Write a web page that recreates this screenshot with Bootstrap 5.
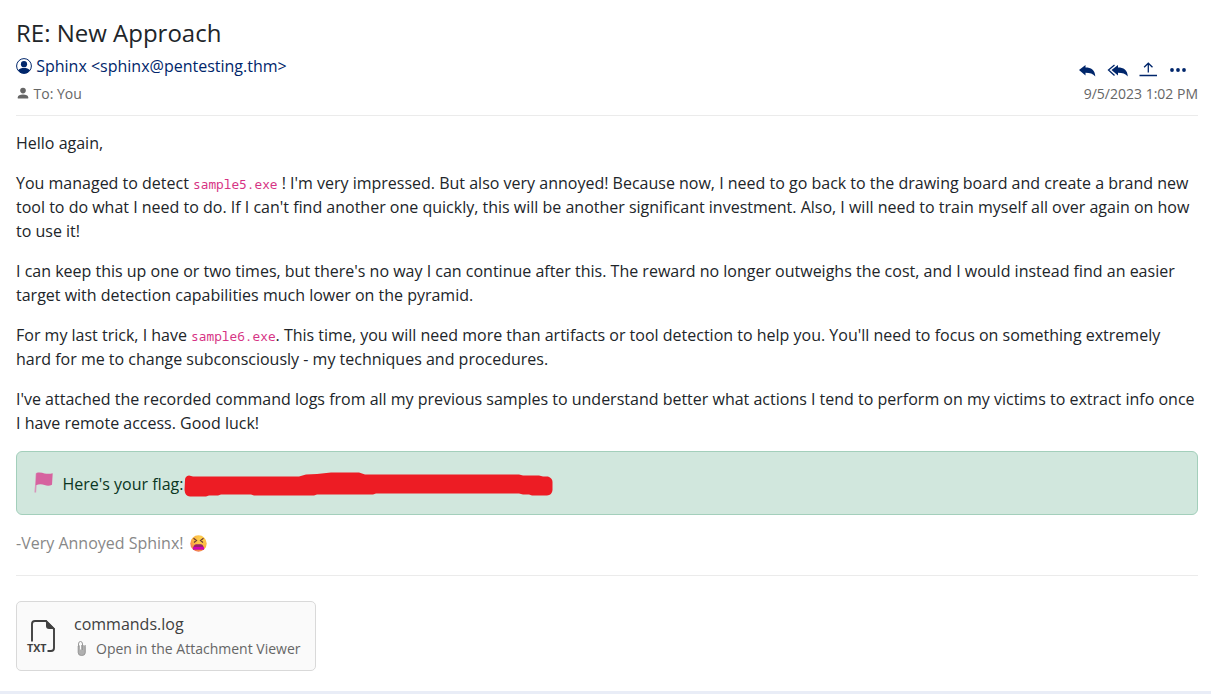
<!DOCTYPE html>
<html lang="en">
<head>
<meta charset="utf-8">
<title>RE: New Approach</title>
<meta name="viewport" content="width=device-width, initial-scale=1">
<link rel="stylesheet" href="https://cdn.jsdelivr.net/npm/bootstrap@5.3.0/dist/css/bootstrap.min.css">
<style>
html{overflow:hidden}
body{font-family:"Open Sans","Noto Sans",sans-serif;font-size:16px;line-height:24px;color:#212529;height:694px;overflow:hidden}
.mail-page{height:691px;padding:16px 13px 0 16px}
.mail-foot{height:3px;background:#e9edf7}
.subject{font-size:24px;line-height:34px;font-weight:400;margin:0}
.navy{color:#00266b}
.sender{height:24px;margin-top:4px;gap:4.2px}
.meta{color:#666;font-size:14px;line-height:20px}
.to-line{margin-top:6px;gap:4.5px}
.mail-head{height:100px;border-bottom:1px solid #ebebeb}
.head-side{padding-bottom:11px}
.mail-actions{margin-bottom:4px;height:20px}
.mail-text{padding-top:15px}
.mail-text p{margin-bottom:16px}
code{font-family:"Noto Sans Mono","DejaVu Sans Mono",monospace;font-size:12.8px;line-height:1;color:#d63384}
.flag-box{background:#d1e7dd;border-color:#a3cfbb;color:#0a3622;height:64px;padding:2px 16px 0 17px;margin:0 0 16px}
.flag-label{margin-left:7.5px;margin-right:1px}
.file-card{width:300px;height:70px;background:#fafafa;border:1px solid #d9d9d9;border-radius:5px;margin-top:25px;padding-left:9px;color:#404040}
.file-copy{margin-left:18px;padding-bottom:2px}
.file-copy .meta{margin-top:3px;padding-left:2px;gap:9px}
.sign{color:#888;gap:6px;padding-bottom:20px;border-bottom:1px solid #ebebeb}
svg{display:block;flex:none}
</style>
<script src="https://cdn.jsdelivr.net/npm/bootstrap@5.3.0/dist/js/bootstrap.bundle.min.js"></script>
</head>
<body class="bg-white">
<main class="mail-page">
  <header class="mail-head d-flex justify-content-between">
    <div>
      <h1 class="subject">RE: New Approach</h1>
      <div class="sender navy d-flex align-items-center">
        <svg width="16" height="16" viewBox="0 0 16 16"><circle cx="8" cy="8" r="7.4" fill="#fff" stroke="#00266b"/><circle cx="8" cy="6.2" r="3.1" fill="#00266b"/><path d="M2 12.6C3.4 10.6 5.5 10 8 10s4.600.6 6 2.600A7.500 7.500 0 0 1 8 15.500 7.500 7.500 0 0 1 2 12.600Z" fill="#00266b"/></svg>
        <span>Sphinx &lt;sphinx@pentesting.thm&gt;</span>
      </div>
      <div class="meta to-line d-flex align-items-center">
        <svg width="13" height="14" viewBox="0 0 13 14"><circle cx="7" cy="3.600" r="2.800" fill="#666"/><path d="M1.800 11.500V10.200C1.800 8.200 4 7.400 7 7.400s5.200.8 5.200 2.800V11.500Z" fill="#666"/></svg>
        <span>To: You</span>
      </div>
    </div>
    <div class="head-side d-flex flex-column align-items-end justify-content-end">
      <div class="mail-actions d-flex align-items-center me-2">
        <svg width="112" height="20" viewBox="1078 60 112 20">
          <g fill="#00266b"><path d="M1079 70 1085.500 65V67.600C1091 67.600 1095 70 1095.300 76.500 1093 73.700 1090 72.800 1085.500 72.800V75.500Z"/>
          <path d="M1111.500 70 1118 65V67.600C1123.500 67.600 1127.500 70 1127.800 76.500 1125.500 73.700 1122.500 72.800 1118 72.800V75.500Z"/>
          <circle cx="1172" cy="70" r="1.900"/><circle cx="1178" cy="70" r="1.900"/><circle cx="1184" cy="70" r="1.900"/></g>
          <g fill="none" stroke="#00266b" stroke-width="1.300"><path d="M1114.500 65 1108.500 70 1114.500 75.500M1148.300 72.500V63.500M1144.100 67.300 1148.300 63.200 1152.500 67.300M1139.500 75.500H1157"/></g>
        </svg>
      </div>
      <div class="meta">9/5/2023 1:02 PM</div>
    </div>
  </header>
  <article class="mail-text">
    <p>Hello again,</p>
    <p>You managed to detect <code>sample5.exe</code> ! I'm very impressed. But also very annoyed! Because now, I need to go back to the drawing board and create a brand new tool to do what I need to do. If I can't find another one quickly, this will be another significant investment. Also, I will need to train myself all over again on how to use it!</p>
    <p>I can keep this up one or two times, but there's no way I can continue after this. The reward no longer outweighs the cost, and I would instead find an easier target with detection capabilities much lower on the pyramid.</p>
    <p>For my last trick, I have <code>sample6.exe</code>. This time, you will need more than artifacts or tool detection to help you. You'll need to focus on something extremely hard for me to change subconsciously - my techniques and procedures.</p>
    <p>I've attached the recorded command logs from all my previous samples to understand better what actions I tend to perform on my victims to extract info once I have remote access. Good luck!</p>
    <div class="alert flag-box d-flex align-items-center" role="alert">
      <svg width="21" height="24" viewBox="0 0 21 24"><path d="M2.500 1.500 1.300 20.500" stroke="#d796bb" stroke-width="1.600" fill="none"/><path d="M2.300 1C5.500.2 8 .7 10.500 1.400S16 2 18.700 1.200L18 12.700C15.500 14 13 13.800 10.500 13S5 12 1.800 13.300Z" fill="#d6639f"/></svg>
      <span class="flag-label">Here's your flag:</span>
      <svg width="370" height="26" viewBox="185 471 370 26"><path d="M186 480Q186 476 190 475.500L194 476.500H300L307 474.500 318 474 332 472.500H360L366 474.500H520L524 475.500H540L544 476.500H549Q553.500 478 553.500 482V490Q553 495.300 548 495.500H533L530 494.500H524L520 493.500H377L374 494.500H318L315 495.500H255L252 494.500H222L219 495.500H210L207 496.500H191Q186 496 185.500 490Z" fill="#ed1c24"/></svg>
    </div>
    <div class="sign d-flex align-items-center">
      <span>-Very Annoyed Sphinx!</span>
      <svg width="17" height="17" viewBox="0 0 17 17"><defs><radialGradient id="face" cx=".65" cy=".25" r=".85"><stop stop-color="#ffd550"/><stop offset=".6" stop-color="#fbb341"/><stop offset="1" stop-color="#ef655d"/></radialGradient></defs><circle cx="8.500" cy="8.500" r="8.200" fill="url(#face)"/><path d="M3.500 3.200 6.500 5.500 4 7.500M13.500 3.200 10.500 5.500 13 7.500" fill="none" stroke="#6b3b35" stroke-width="1.200"/><path d="M3 14.500C3 12 4.200 9.200 6 9.200H11C12.800 9.200 14 12 14 14.500Z" fill="#97226b"/><path d="M3.200 12H13.800L14 14.500H3Z" fill="#d500b5"/></svg>
    </div>
  </article>
  <section class="file-card d-flex align-items-center">
    <svg width="30" height="36" viewBox="26 618 30 36"><path d="M32 641.500V624Q32 621 35 621H46L54 629V648Q54 651 51 651H47.500" fill="none" stroke="#404040" stroke-width="1.900"/><path d="M46 620 55 629H49Q46 629 46 626Z" fill="#404040"/><text x="27" y="652" font-family="Open Sans" font-size="11" font-weight="700" textLength="19.500" lengthAdjust="spacingAndGlyphs" fill="#404040">TXT</text></svg>
    <div class="file-copy">
      <div>commands.log</div>
      <div class="meta d-flex align-items-center">
        <svg width="11" height="18" viewBox="0 0 11 18"><rect x="2" y="5" width="7.500" height="10.500" rx="3" fill="#b0b0b0"/><path d="M2.500 7V4Q2.500 1.500 4.500 1.500T6.500 4V10M9.200 5V12.500Q9.200 15.500 5.700 15.500T2.200 12.500V6" fill="none" stroke="#999"/><path d="M4.500 4V9.500" stroke="#fafafa"/></svg>
        <span>Open in the Attachment Viewer</span>
      </div>
    </div>
  </section>
</main>
<div class="mail-foot"></div>
</body>
</html>
